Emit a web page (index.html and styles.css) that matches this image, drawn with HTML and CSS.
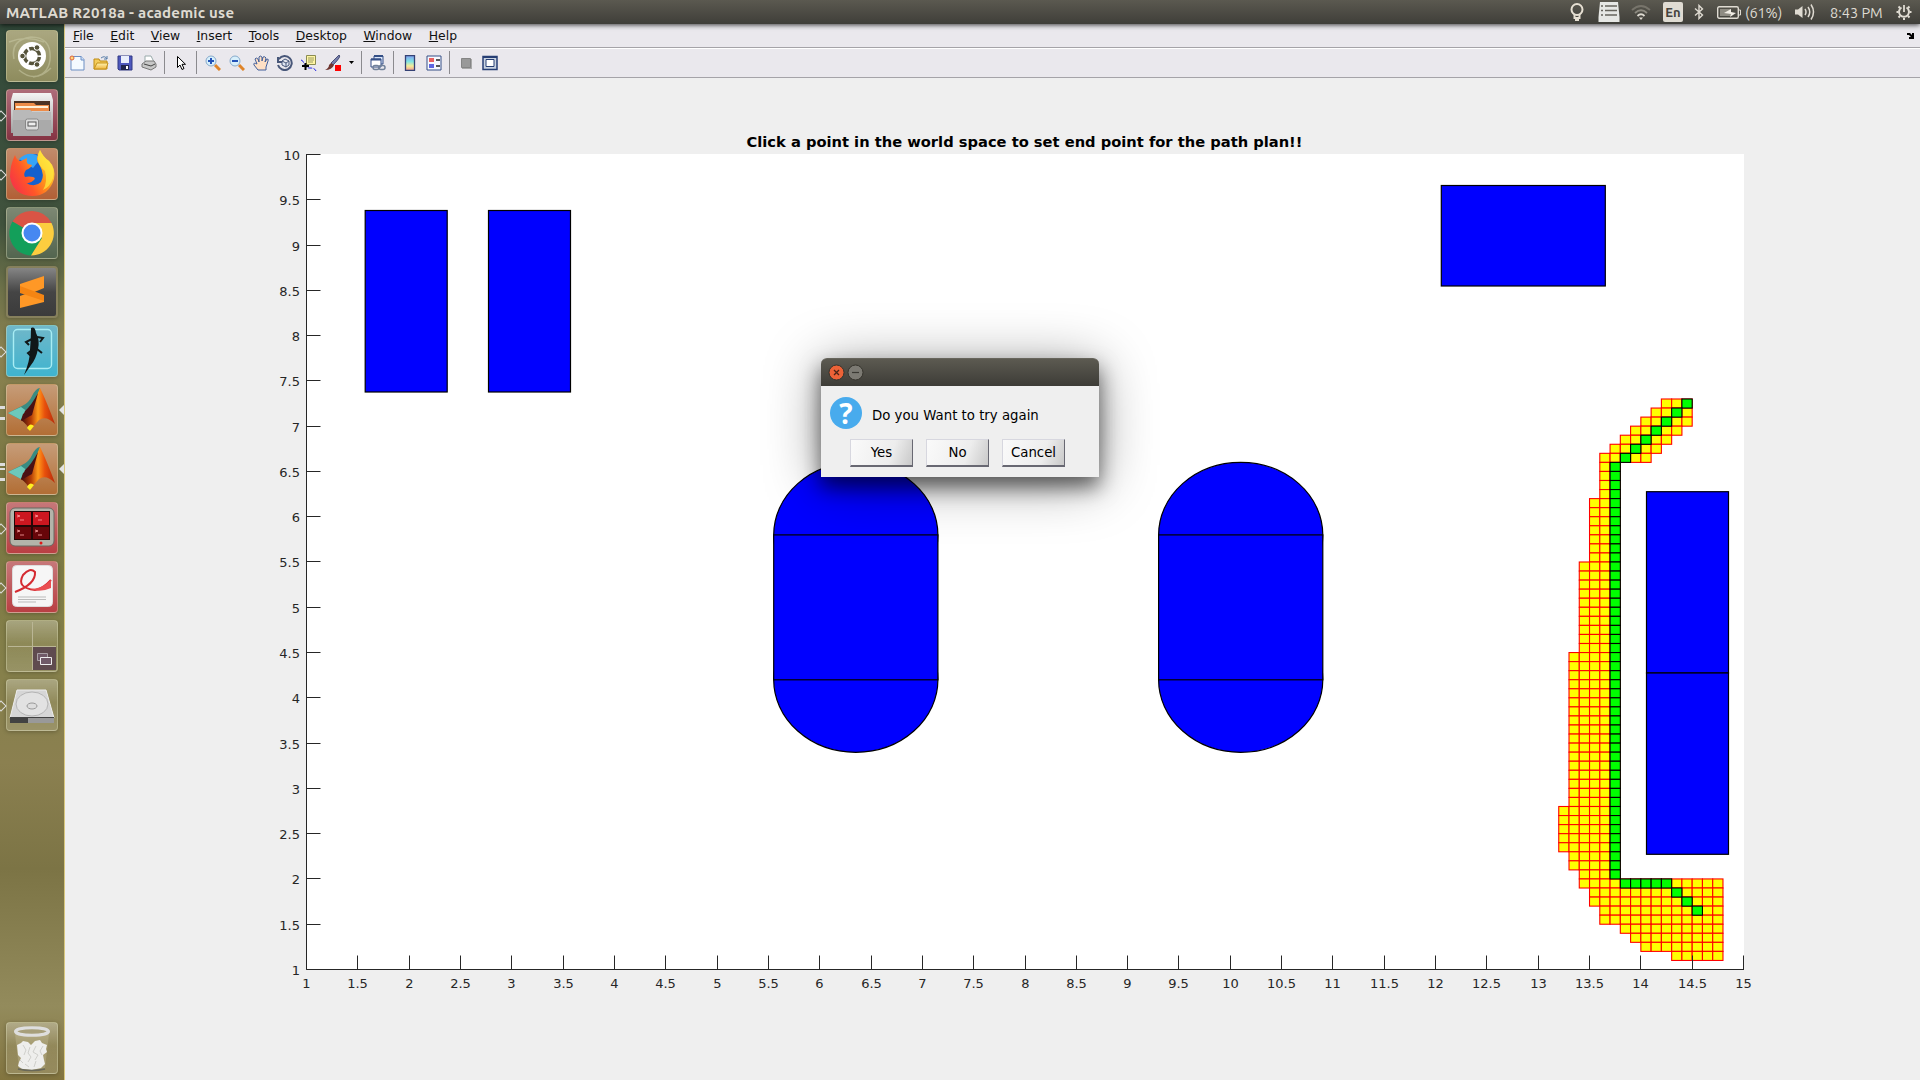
FILE: index.html
```html
<!DOCTYPE html>
<html lang="en">
<head>
<meta charset="utf-8">
<title>MATLAB R2018a - academic use</title>
<link rel="stylesheet" href="styles.css">
</head>
<body>
<svg class="defs" width="0" height="0" aria-hidden="true">
  <defs>
    <linearGradient id="gold" x1="0" y1="0" x2="0" y2="1"><stop offset="0" stop-color="#fff3b0"/><stop offset="1" stop-color="#efb53c"/></linearGradient>
    <linearGradient id="jet" x1="0" y1="0" x2="0" y2="1"><stop offset="0" stop-color="#7f9cf0"/><stop offset=".4" stop-color="#80e4e4"/><stop offset=".7" stop-color="#f5ee98"/><stop offset="1" stop-color="#f29a94"/></linearGradient>
    <linearGradient id="steel" x1="0" y1="0" x2="0" y2="1"><stop offset="0" stop-color="#f4f4f4"/><stop offset="1" stop-color="#a0a0a0"/></linearGradient>
    <linearGradient id="fox" x1="0" y1=".8" x2="1" y2=".2"><stop offset="0" stop-color="#f5304a"/><stop offset=".35" stop-color="#ff5628"/><stop offset=".65" stop-color="#ff9a1b"/><stop offset="1" stop-color="#fff04a"/></linearGradient>
    <linearGradient id="flame" x1="0" y1="0" x2="1" y2="0"><stop offset="0" stop-color="#430c0c"/><stop offset=".3" stop-color="#b63f08"/><stop offset=".5" stop-color="#ff9a1b"/><stop offset=".7" stop-color="#e8500c"/><stop offset="1" stop-color="#b62a0a"/></linearGradient>
    <symbol id="matlab" viewBox="0 0 52 52">
      <path d="M2 29 16 22Q23 19 26 12Q30 4 34 4L28 27 15 36Z" fill="#388b82"/>
      <path d="M2 29 15 23 22 28 15 36Z" fill="#6cc9bb"/>
      <path d="M17 30Q25 26 34 4Q40 16 49 40Q40 31 33 36Q28 41 24 47Q21 40 15 36Z" fill="url(#flame)"/>
      <path d="M19 27Q25 22 32 9L26 31 15 37Z" fill="#4a1114"/>
      <path d="M21 44Q24 38 28 42L24 47Z" fill="#ffef22"/>
    </symbol>
  </defs>
</svg>

<header class="panel">
  <span class="panel-title">MATLAB R2018a - academic use</span>
  <div class="tray">
    <svg class="t-bulb" width="16" height="20" viewBox="0 0 16 20"><circle cx="8" cy="7.5" r="5.5" fill="none" stroke="#e6dfd2" stroke-width="2"/><path d="M5.500 12v4h5v-4M6 18h4" fill="none" stroke="#e6dfd2" stroke-width="2"/></svg>
    <svg class="t-list" width="22" height="20" viewBox="0 0 22 20"><path d="M2 0h18l1.500 15v5H.5v-5Z" fill="#e6e7e4"/><path d="M3 4h2m2 0h12M3 8.500h2m2 0h12M3 13h2m2 0h12" stroke="#66645c" stroke-width="1.500"/></svg>
    <svg class="t-wifi" width="20" height="16" viewBox="0 0 20 16"><g fill="none" stroke-width="1.800"><path d="M1 6Q10-2 19 6" stroke="#77746b"/><path d="M4 9Q10 3.500 16 9" stroke="#8d8a80"/><path d="M6.500 12Q10 8.500 13.500 12" stroke="#dfdbd2"/></g><path d="M8 13.500h4l-2 2.500Z" fill="#dfdbd2"/></svg>
    <span class="lang">En</span>
    <svg class="t-bt" width="10" height="16" viewBox="0 0 10 16"><path d="M1 4.500 8.500 11 5 14.500v-13L8.500 5 1 11.500" fill="none" stroke="#dfdbd2" stroke-width="1.400"/></svg>
    <svg class="t-bat" width="24" height="13" viewBox="0 0 24 13"><rect x=".7" y=".7" width="20.600" height="11.600" rx="1.500" fill="none" stroke="#dfdbd2" stroke-width="1.400"/><path d="M22 4h1.500v5H22" fill="none" stroke="#dfdbd2"/><path d="M3 3h11v7H3Z" fill="#8e8b82"/><path d="m7 7 7-4v3l5 1-6 4 1-3Z" fill="#f0ece4"/></svg>
    <span class="pct">(61%)</span>
    <svg class="t-vol" width="20" height="16" viewBox="0 0 20 16"><path d="M0 5.500h3L7.500 2v12L3 10.500H0Z" fill="#dfdbd2"/><path d="M10 5Q12 8 10 11M13 3q3.500 5 0 10M16 .5q5 7.500 0 15" fill="none" stroke="#dfdbd2" stroke-width="1.500"/></svg>
    <span class="clock">8:43 PM</span>
    <svg class="t-gear" width="16" height="16" viewBox="0 0 16 16"><path d="M10.500 3.500a5 5 0 1 1-5 0" fill="none" stroke="#dfdbd2" stroke-width="2"/><path d="M8 1v7" stroke="#dfdbd2" stroke-width="1.800"/><path d="M.5 8h2m11 0h2M2.500 2.500 4 4m8 0 1.500-1.500M2.500 13.500 4 12m8 0 1.500 1.500M8 14v2" stroke="#dfdbd2" stroke-width="2"/></svg>
  </div>
</header>

<div class="desktop">
<nav class="dock">
  <div class="tile ubuntu"><svg viewBox="0 0 52 52"><path d="M8 29Q4 10 25 7Q46 7 44 30Q42 45 27 47M3 12Q20 5 38 12M13 40Q29 54 45 38" fill="none" stroke="#c4c4a0" stroke-opacity=".6" stroke-width="1.500"/><circle cx="26" cy="26" r="14" fill="#fff"/><circle cx="26" cy="26" r="7.500" fill="none" stroke="#56533a" stroke-width="3.500" stroke-dasharray="13.700 2" stroke-dashoffset="-1"/><g fill="#56533a" stroke="#fff"><circle cx="16.500" cy="26" r="2.800"/><circle cx="31" cy="17.500" r="2.800"/><circle cx="31" cy="34.500" r="2.800"/></g></svg></div>
  <div class="tile files run"><svg viewBox="0 0 52 52"><path d="M7 4h38l2 7v33H5V11Z" fill="url(#steel)"/><path d="M8 12h36v10H8Z" fill="#4b3224"/><path d="M9 14h19l2 2h13v6H9Z" fill="#ed8c49"/><path d="M10 17h32v2H10Z" fill="#fff0d8"/><path d="M7 21h17l2 2h19v24H7Z" fill="#aaa"/><path d="M7 21h17l2 2h19v8H7Z" fill="#b9b9b9"/><rect x="19.500" y="30" width="13" height="11" rx="2" fill="#ddd" stroke="#888"/><rect x="22" y="33" width="8" height="4" fill="#eee" stroke="#555"/></svg></div>
  <div class="tile firefox run"><svg viewBox="0 0 52 52"><circle cx="27" cy="24" r="18" fill="#1460cd"/><path d="M13 11Q24 1 35 10L27 20Z" fill="#36a4f7"/><path d="M9 7Q11 13 15 13L21 10Q20 14 22 16L26 17Q25 20 20 22Q17 26 19 29Q23 28 27 29Q30 30 28 32Q24 36 20 35Q29 40 35 34Q39 27 34 18Q28 11 34 2Q37 9 43 13Q50 20 48 31Q43 48 26 48Q7 47 4 29Q4 17 9 7Z" fill="url(#fox)"/><path d="M34 2Q37 9 43 13Q49 20 47 30Q44 39 37 42Q42 34 39 23Q28 14 34 2Z" fill="#ffe83e" fill-opacity=".75"/></svg></div>
  <div class="tile chrome"><svg viewBox="0 0 52 52"><path d="M26 26 6.500 14.500A22.500 22.500 0 0 1 45.500 16H26Z" fill="#d95445"/><path d="M26 26 6.500 14.500A22.500 22.500 0 0 0 25 48.500L36 31Z" fill="#139f5a"/><path d="M26 16h19.500A22.500 22.500 0 0 1 25 48.500L36 31Z" fill="#fccd3f"/><circle cx="26" cy="26" r="10.500" fill="#fff"/><circle cx="26" cy="26" r="8.500" fill="#4688f1"/></svg></div>
  <div class="tile sublime"><svg viewBox="0 0 52 52"><path d="M14 18 38 10v12l-12 5 12 4v5L14 42V30l11-4-11-4Z" fill="#ff9826"/><path d="m14 20 24 9v6l-24-8Z" fill="#f58513"/></svg></div>
  <div class="tile gecko run"><svg viewBox="0 0 52 52"><rect x="7.500" y="4.500" width="38" height="39" rx="4" fill="none" stroke="#a8edf4" stroke-width="1.400"/><path d="M25 3Q29 1 30 8Q34 15 32 24Q30 34 25 40L18 50Q24 36 24 25Q25 13 25 3Z" fill="#101718"/><path d="M31 12 37 13 34 17M26 14 20 17 23 20M31 24 36 28M26 25 22 28 25 31" fill="none" stroke="#101718" stroke-width="2"/></svg></div>
  <div class="tile mat run multi focus"><svg><use href="#matlab"/></svg></div>
  <div class="tile mat run triple focus"><svg><use href="#matlab"/></svg></div>
  <div class="tile terminator run"><svg viewBox="0 0 52 52"><rect x="4" y="6" width="44" height="38" rx="5" fill="#b3b4aa" stroke="#676861"/><rect x="8" y="9" width="36" height="29" fill="#240707"/><path d="M9 10h16v13H9Zm18 0h16v13H27Z" fill="#cc1720"/><path d="M9 25h16v12H9Zm18 0h16v12H27Z" fill="#680509"/><path d="m11 13 3 1-3 1m3 3h4m11-5 3 1-3 1m3 3h4M11 28l3 1-3 1m3 3h4m11-5 3 1-3 1m3 3h4" fill="none" stroke="#ffa5a5" stroke-opacity=".8"/><circle cx="35" cy="41" r="1.500" fill="#df1919"/></svg></div>
  <div class="tile reader run"><svg viewBox="0 0 52 52"><rect x="6.500" y="4.500" width="40" height="41" rx="4" fill="#f6f6f6" stroke="#ddd"/><path d="M9 31Q30 23 29 11Q24 6 17 14Q10 27 29 29Q37 28 45 19" fill="none" stroke="#d52b31" stroke-width="2"/><path d="M24 28Q36 28 45 19v8Q34 32 24 28Z" fill="#ea4e51"/><path d="M12 36h28M12 38.500h28M12 41h18" stroke="#bbb"/></svg></div>
  <div class="tile switcher"><svg viewBox="0 0 52 52"><path d="M27 27h23v23H27Z" fill="#5f4b4f"/><path d="M26.500 2v48M2 26.500h48" stroke="#bab695"/><path d="M31.500 33.500h10v7h-10Z" fill="#705a68" stroke="#a9a0a5"/><path d="M34.500 37.500h11v7h-11Z" fill="#705a68" stroke="#eee"/></svg></div>
  <div class="tile disk run"><svg viewBox="0 0 52 52"><path d="M11 11h29l8 28H4Z" fill="#d6d6d6" stroke="#eee"/><ellipse cx="26" cy="25" rx="16" ry="12" fill="#e2e2e2" stroke="#b5b5b5"/><ellipse cx="26" cy="27" rx="5" ry="3" fill="#ddd" stroke="#999"/><path d="M4 38h44v6H4Z" fill="#424242"/><path d="M22 39h26v5H22Z" fill="#999"/></svg></div>
  <div class="tile trash"><svg viewBox="0 0 52 52"><path d="M9 12h34l-4 34q-13 4-26 0Z" fill="#ddd5b5" fill-opacity=".25"/><path d="m11 23 4-2 2-2 5 1 3 3 4-4 5-1 2 3 5 2-1 4 1 3-4 3 1 5 1 4-4 4-9 2-10-1-4-3 1-4 2-4-3-3Z" fill="#eeeeec"/><path d="m17 23 3 5-2 5m6-8-2 6 3 4-3 5m8-16-3 6 5 3-3 5m8-14-3 5 2 4m-17 9 4 3m7-6-2 6m-14-7 3 3" fill="none" stroke="#cfcfcb"/><ellipse cx="26" cy="9.500" rx="16.500" ry="3.800" fill="#a79f7b" stroke="#dedede" stroke-width="3"/><path d="M12 47q14 3 27 0" fill="none" stroke="#696858" stroke-width="1.500"/></svg></div>
</nav>

<main class="figure-window">
  <div class="menubar">
    <span><u>F</u>ile</span><span><u>E</u>dit</span><span><u>V</u>iew</span><span><u>I</u>nsert</span><span><u>T</u>ools</span><span><u>D</u>esktop</span><span><u>W</u>indow</span><span><u>H</u>elp</span>
    <svg class="undock" width="7" height="6" viewBox="0 0 7 6"><path d="M0 0h3l2 2V0h2v6H2V4h2L2 2H0Z" fill="#000"/></svg>
  </div>
  <div class="toolbar">
    <svg viewBox="0 0 16 16"><path d="M4 1.500h8l3 3V15H2V5" fill="#f4faff" stroke="#6d8fc4"/><path d="M12 1v4h3" fill="#cfe0fa" stroke="#6d8fc4"/><circle cx="3" cy="3" r="2" fill="#ffd77a" stroke="#db613b"/></svg>
    <svg viewBox="0 0 16 16"><path d="M1 14V4h5l1 2h7v8Z" fill="#f4cc5a" stroke="#bd8a13"/><path d="m1 14 3-6h11l-2 6Z" fill="url(#gold)" stroke="#c59119"/><path d="M8 3q4-3 6 1m0-3v3h-3" fill="none" stroke="#577da9"/></svg>
    <svg viewBox="0 0 16 16"><path d="M1 1h14v14H2L1 14Z" fill="#4e58bd" stroke="#313884"/><path d="M4 1h8v7H4Z" fill="#e9eefc"/><path d="M4 10h8v5H4Z" fill="#20254d"/><path d="M9 11h2v3H9Z" fill="#fff"/></svg>
    <svg viewBox="0 0 16 16"><path d="m4 7 0-6h6l3 6Z" fill="#fff" stroke="#9aa"/><path d="m1 9 4-3h8l2 3v3l-5 3-9-3Z" fill="#c7c7c7" stroke="#777"/><path d="m3 9 7 2 4-2" fill="none" stroke="#444"/></svg>
    <i></i>
    <svg class="arrow" viewBox="0 0 16 16"><path d="M4.500 1.500v11l2.500-2.500 2 4.500 2-1-2-4.200h3.500Z" fill="#fff" stroke="#000"/></svg>
    <i></i>
    <svg viewBox="0 0 16 16"><path d="m10 10 5 5" stroke="#df8428" stroke-width="3"/><circle cx="6" cy="6" r="5" fill="#d7effb" stroke="#87aacb"/><path d="M3 6h6M6 3v6" stroke="#2252b8" stroke-width="2"/></svg>
    <svg viewBox="0 0 16 16"><path d="m10 10 5 5" stroke="#df8428" stroke-width="3"/><circle cx="6" cy="6" r="5" fill="#d7effb" stroke="#87aacb"/><path d="M3 6h6" stroke="#2252b8" stroke-width="2"/></svg>
    <svg viewBox="0 0 16 16"><path d="M5 15 1 10Q0 7 4 9L2 4Q3 2 5 4L6 7 6 2Q7 0 9 2V6l1-4q2-1 3 1l-1 4 2-3q2 0 1 2l-2 6v3Z" fill="#ffe0c5" stroke="#415f9b"/></svg>
    <svg viewBox="0 0 16 16"><path d="M2 4a7 7 0 1 1-1 6M1 2v5h5" fill="none" stroke="#485779" stroke-width="2"/><path d="m5 6 3-2 4 2v4l-3 2-4-2Zm0 0 4 2 3-2M9 8v4" fill="#dfe6f2" stroke="#485779"/></svg>
    <svg viewBox="0 0 16 16"><path d="M5.500.5h9v9h-9Z" fill="#fff5a4" stroke="#8b8c51"/><path d="M7 3h6M7 5h6M7 7h5" stroke="#999a64"/><path d="M0 5q2 0 3 4t6 4 6 3" fill="none" stroke="#2424e1" stroke-dasharray="4 1.500"/><path d="M1 11h7M4.500 8v7" stroke="#000" stroke-width="2"/></svg>
    <svg viewBox="0 0 16 16"><path d="M14 0q3 1-6 10L6 8Z" fill="#787fab" stroke="#495079"/><path d="m6 8 3 2q-2 5-9 5 4-2 4-5Z" fill="#6f3530"/><path d="M10 10h6v6h-6Z" fill="#f00"/></svg>
    <svg class="drop" viewBox="0 0 5 3"><path d="M0 0h5L2.500 3Z"/></svg>
    <i></i>
    <svg viewBox="0 0 16 16"><path d="M4 1h9v8H4Z" fill="#dae6fa" stroke="#344f86"/><path d="M1 4h10v8H1Z" fill="#fff" stroke="#344f86"/><path d="M4 1h9M1 4.500h10" stroke="#344f86" stroke-width="2"/><rect x="3" y="10.500" width="6" height="4" rx="2" fill="none" stroke="#71829a" stroke-width="1.500"/><rect x="9" y="10.500" width="6" height="4" rx="2" fill="none" stroke="#71829a" stroke-width="1.500"/></svg>
    <i></i>
    <svg viewBox="0 0 16 16"><path d="M3.500.5h9v15h-9Z" fill="url(#jet)" stroke="#344174" stroke-width="1.300"/></svg>
    <svg viewBox="0 0 16 16"><path d="M1 1h14v14H1Z" fill="#f7f9ff" stroke="#344f86"/><path d="M3 3h5v4H3Z" fill="#e96060"/><path d="M3 9h5v4H3Z" fill="#5f66e0"/><path d="M10 5h4M10 11h4" stroke="#222" stroke-width="1.300"/></svg>
    <i></i>
    <svg viewBox="0 0 16 16"><path d="M4 4h10v10H4Z" fill="#aaa"/><path d="M3.500 3.500h9v9h-9Z" fill="#999" stroke="#858585"/></svg>
    <svg viewBox="0 0 16 16"><path d="M1 1.500h14v13H1Z" fill="#c9d3e1" stroke="#263e74" stroke-width="1.500"/><path d="M1 2h14" stroke="#263e74" stroke-width="2"/><path d="M4 4.500h8v7H4Z" fill="#fff" stroke="#263e74"/></svg>
  </div>
  <div class="canvas">
    <svg class="plot" width="1855" height="1002" viewBox="65 78 1855 1002">
      <rect x="306" y="154" width="1438" height="816" fill="#fff"/>
      <text class="plot-title" x="1024.500" y="146.500" textLength="556" lengthAdjust="spacingAndGlyphs" text-anchor="middle">Click a point in the world space to set end point for the path plan!!</text>
      <g id="obstacles" class="obstacle">
        <rect x="365.200" y="210.500" width="82" height="181.500"/>
        <rect x="488.500" y="210.500" width="82" height="181.500"/>
        <rect x="1441.300" y="185.500" width="164" height="100.500"/>
        <rect x="1646.500" y="491.700" width="82" height="181.300"/>
        <rect x="1646.500" y="673" width="82" height="181.300"/>
        <ellipse cx="855.800" cy="534.900" rx="82.100" ry="72.500"/>
        <ellipse cx="855.800" cy="679.800" rx="82.100" ry="72.500"/>
        <rect x="773.700" y="534.900" width="164.200" height="144.900"/>
        <ellipse cx="1240.700" cy="534.900" rx="82.100" ry="72.500"/>
        <ellipse cx="1240.700" cy="679.800" rx="82.100" ry="72.500"/>
        <rect x="1158.600" y="534.900" width="164.200" height="144.900"/>
      </g>
      <g id="explored" class="explored"></g>
      <g id="path" class="path"></g>
      <g id="axes" class="axes"></g>
    </svg>
  </div>
</main>
</div>

<section class="dialog">
  <div class="dialog-bar">
    <svg width="36" height="18" viewBox="0 0 36 18"><circle cx="8.500" cy="8.500" r="7.500" fill="#ec6237" stroke="#36342d"/><path d="m6 6 5 5m0-5-5 5" stroke="#4b2417" stroke-width="1.300"/><circle cx="27.500" cy="8.500" r="7.500" fill="#7c7a73" stroke="#36342d"/><path d="M24 8.500h7" stroke="#3b3933" stroke-width="1.200"/></svg>
  </div>
  <div class="dialog-message"><span class="question">?</span><p>Do you Want to try again</p></div>
  <div class="dialog-buttons"><button>Yes</button><button>No</button><button>Cancel</button></div>
</section>
<script src="plot.js"></script>
</body>
</html>
```
FILE: styles.css
```css
* { box-sizing: border-box; }
body { margin: 0; width: 1920px; height: 1080px; overflow: hidden; background: #efefef; font-family: "DejaVu Sans", sans-serif; }
.defs { position: absolute; }

.panel { height: 24px; display: flex; align-items: center; justify-content: space-between; padding: 0 8px 0 6px; background: linear-gradient(#5b5950, #3f3e39); color: #dfdbd2; font-family: Ubuntu, "Noto Sans", sans-serif; position: relative; z-index: 2; box-shadow: 0 1px 5px rgba(0, 0, 0, .75); }
.panel-title { font-size: 15px; font-weight: 700; white-space: nowrap; letter-spacing: .23px; }
.tray { display: flex; align-items: center; font-size: 15px; white-space: nowrap; }
.tray svg { flex: none; }
.t-list { margin-left: 13px; }
.t-wifi { margin-left: 11px; }
.lang { width: 20px; height: 20px; margin-left: 12px; border-radius: 2px; background: #dfdbd2; color: #45433d; font-size: 13px; font-weight: 600; line-height: 20px; text-align: center; }
.t-bt { margin-left: 11px; }
.t-bat { margin-left: 13px; }
.pct { width: 38px; margin-left: 4px; font-size: 14.5px; letter-spacing: -.1px; }
.t-vol { margin-left: 12px; }
.clock { width: 53px; margin-left: 15px; font-size: 14.5px; }
.t-gear { margin-left: 13px; }

.desktop { display: flex; height: 1056px; }
.dock { width: 65px; flex: none; display: flex; flex-direction: column; gap: 7px; padding: 6px; background: linear-gradient(#32493a 0%, #41533d 19%, #6d7149 25%, #8b8251 31%, #777540 45%, #85804a 60%, #8b8050 70%, #7c7445 80%, #938b5c 93%, #82743f 100%); border-right: 1px solid #d8c77e; }
.tile { width: 52px; height: 52px; flex: none; border: 1px solid rgba(220, 220, 180, .4); border-radius: 4px; position: relative; background: linear-gradient(rgba(255, 255, 255, .3), rgba(255, 255, 255, .08) 45%, rgba(255, 255, 255, .15)); box-shadow: 0 1px 4px rgba(0, 0, 0, .25); }
.tile svg { display: block; width: 52px; height: 52px; margin: -1px; }
.ubuntu { background: linear-gradient(#aaa780, #8e8c5e); }
.files { background: linear-gradient(#ae6c79, #853343); }
.firefox { background: linear-gradient(#c18b6b, #b26036); }
.chrome { background: linear-gradient(#7d8873, #53654f); }
.sublime { background: linear-gradient(#858585, #454545 50%, #3b3b3b); border: 2px solid #86805c; }
.sublime svg { margin: -2px; }
.gecko { background: linear-gradient(#70b7c9, #3fb4cf); }
.mat { background: linear-gradient(#c69c78, #b26e35); }
.terminator, .reader { background: linear-gradient(#c67779, #b93f43); }
.trash { margin-top: auto; }
.run::before { content: ""; position: absolute; left: -10px; top: 22px; width: 6px; height: 6px; border: 1px solid #ddd; transform: rotate(45deg); }
.multi::before, .triple::before { left: -8px; top: 21px; width: 6px; height: 8px; border-width: 3px 0; transform: none; }
.triple::before { top: 19px; height: 12px; background: linear-gradient(transparent 2px, #ddd 2px, #ddd 4px, transparent 4px); }
.focus::after { content: ""; position: absolute; right: -7px; top: 20px; border: 5px solid transparent; border-right-color: #e3e3e3; border-left: 0; }

.figure-window { flex: 1; min-width: 0; display: flex; flex-direction: column; }
.menubar { height: 24px; flex: none; display: flex; align-items: center; gap: 16.5px; padding: 0 6px 0 8px; background: #eae8ed; border-bottom: 1px solid #a5a3a8; font-size: 12.4px; line-height: 14px; color: #111; }
.menubar span { white-space: nowrap; }
.undock { margin-left: auto; }
.toolbar { height: 30px; flex: none; display: flex; align-items: center; gap: 8px; padding: 0 0 1px 4px; background: #eae8ed; border-top: 1px solid #fff; border-bottom: 1px solid #a5a3a8; }
.toolbar svg { width: 16px; height: 16px; flex: none; }
.toolbar i { width: 1px; height: 23px; background: #8b8a8e; margin-left: -1px; }
.toolbar .drop { width: 5px; height: 3px; }
.canvas { flex: 1; min-height: 0; overflow: hidden; }
.plot { display: block; width: 1855px; height: 1002px; }
.plot-title { font: 700 14.9px "DejaVu Sans", sans-serif; }
.obstacle { fill: #00f; stroke: #000; stroke-width: 1.2px; }
.explored { fill: #ff0; stroke: #f00; stroke-width: 1.1px; }
.path { fill: #0f0; stroke: #000; stroke-width: 1.1px; }
.axes { stroke: #262626; fill: none; }
.axes text { stroke: none; fill: #262626; font: 13px "DejaVu Sans", sans-serif; }

.dialog { position: absolute; left: 821px; top: 358px; z-index: 3; width: 278px; height: 119px; border-radius: 6px 6px 0 0; background: #efefef; box-shadow: 0 10px 20px rgba(0, 0, 0, .55), 0 6px 55px rgba(0, 0, 0, .4); }
.dialog-bar { height: 28px; padding: 5px 7px; border-radius: 6px 6px 0 0; background: linear-gradient(#5c5a51, #3d3c37); border-top: 1px solid #67655c; }
.dialog-bar svg { display: block; }
.dialog-message { display: flex; padding: 11px 0 0 9px; height: 53px; }
.question { width: 32px; height: 32px; border-radius: 50%; background: #48abed; color: #fff; text-align: center; font: 700 28px/33px "Open Sans", sans-serif; }
.dialog-message p { margin: 10px 0 0 10px; font-size: 13.3px; line-height: 17px; white-space: nowrap; }
.dialog-buttons { display: flex; gap: 13px; padding-left: 29px; }
.dialog-buttons button { width: 63px; height: 28px; padding: 0; border: 1px solid; border-width: 1px 1px 2px 1px; border-color: #d7d7df #686872 #686872 #d7d7df; background: linear-gradient(110deg, #fafafa, #ededed 65%, #c9c9c9); font: 13.3px "DejaVu Sans", sans-serif; color: #000; }
```
FILE: plot.js
```js
const NS = "http://www.w3.org/2000/svg";
const px = x => 306.5 + (x - 1) * 102.643;
const py = y => 969.5 - (y - 1) * 90.556;

function add(parent, name, attrs, text) {
  const el = document.createElementNS(NS, name);
  for (const key in attrs) el.setAttribute(key, attrs[key]);
  if (text !== undefined) el.textContent = text;
  parent.appendChild(el);
}

function cell(group, column, row) {
  add(group, "rect", { x: px(column / 10), y: py(row / 10), width: 10.264, height: 9.056 });
}

// Grid units are tenths: [top row, bottom row, first column, end column].
const bands = [
  [73, 73, 142, 145], [72, 72, 141, 145], [71, 71, 140, 145],
  [70, 70, 139, 144], [69, 69, 138, 143], [68, 68, 137, 142],
  [67, 67, 136, 141], [66, 63, 136, 138], [62, 56, 135, 138],
  [55, 46, 134, 138], [45, 29, 133, 138], [28, 24, 132, 138],
  [23, 22, 133, 138], [21, 21, 134, 138], [20, 20, 134, 148],
  [19, 18, 135, 148], [17, 16, 136, 148], [15, 15, 138, 148],
  [14, 14, 139, 148], [13, 13, 140, 148], [12, 12, 143, 148]
];
const explored = document.getElementById("explored");
for (const [top, bottom, first, end] of bands)
  for (let row = top; row >= bottom; row--)
    for (let column = first; column < end; column++) cell(explored, column, row);

const path = document.getElementById("path");
for (let i = 0; i < 7; i++) cell(path, 144 - i, 73 - i);
for (let row = 66; row >= 21; row--) cell(path, 137, row);
for (let column = 138; column <= 142; column++) cell(path, column, 20);
for (let i = 0; i < 3; i++) cell(path, 143 + i, 19 - i);

const axes = document.getElementById("axes");
add(axes, "path", { d: "M306.500 154V969.500H1744" });
for (let v = 1; v <= 15; v += 0.5) {
  const x = Math.floor(px(v)) + 0.5;
  add(axes, "path", { d: `M${x} 969.500v-14` });
  add(axes, "text", { x: x, y: 988, "text-anchor": "middle" }, String(v));
}
for (let v = 1; v <= 10; v += 0.5) {
  const y = Math.floor(py(v)) + 0.5;
  add(axes, "path", { d: `M306.500 ${y}h14` });
  add(axes, "text", { x: 300, y: y + 5, "text-anchor": "end" }, String(v));
}
```
